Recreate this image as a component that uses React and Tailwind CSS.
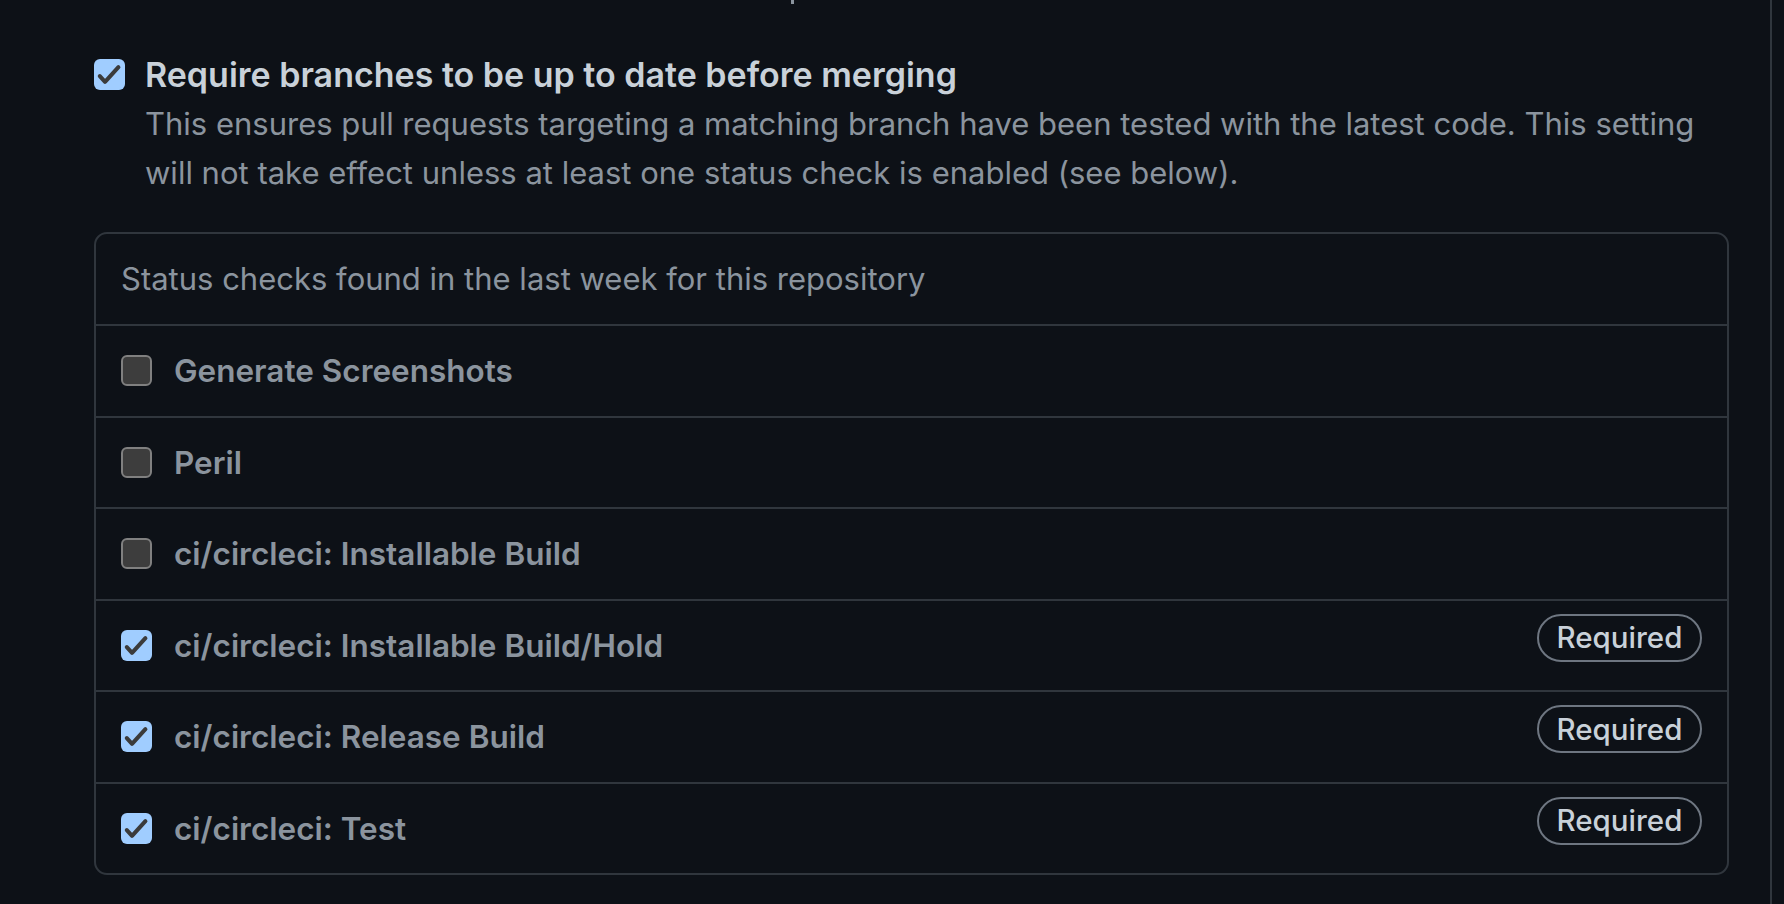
import React from 'react';

const checks = [
    { name: 'Generate Screenshots', checked: false },
    { name: 'Peril', checked: false },
    { name: 'ci/circleci: Installable Build', checked: false },
    { name: 'ci/circleci: Installable Build/Hold', checked: true },
    { name: 'ci/circleci: Release Build', checked: true },
    { name: 'ci/circleci: Test', checked: true },
];

function Box({ checked }) {
    if (!checked) {
        return (
            <span className="w-[31px] h-[31px] shrink-0 rounded-[6px] bg-[#3d3d3d] border-2 border-[#808080]" />
        );
    }
    return (
        <span className="w-[31px] h-[31px] shrink-0 rounded-[6px] bg-[#a0cdff] flex items-center justify-center">
            <svg viewBox="0 0 16 16" className="w-[31px] h-[31px]">
                <path
                    d="M3 8.8 L5.7 11.8 L12.6 4.2"
                    fill="none"
                    stroke="#3b3b3b"
                    strokeWidth="2.1"
                    strokeLinecap="round"
                    strokeLinejoin="round"
                />
            </svg>
        </span>
    );
}

export default function App() {
    return (
        <div
            className="w-full h-[904px] bg-[#0d1117] flex"
            style={{ fontFamily: 'Inter, "Noto Sans", sans-serif' }}
        >
            <div className="w-[1772px] h-full border-r-2 border-[#30363d] flex flex-col">
                <div className="h-[4px] flex">
                    <span className="ml-[791px] w-[3px] h-[4px] bg-[#8b949e]" />
                </div>
                <div className="pl-[94px] pr-[41px] pt-[46px]">
                    <div className="flex gap-[20px]">
                        <div className="h-[49px] flex items-center">
                            <Box checked />
                        </div>
                        <div>
                            <div className="h-[49px] leading-[49px] text-[34px] font-semibold text-[#c9d1d9] whitespace-nowrap">
                                Require branches to be up to date before merging
                            </div>
                            <p className="leading-[49px] text-[31px] text-[#8b949e] whitespace-nowrap">
                                This ensures pull requests targeting a matching branch have been tested with the latest code. This setting
                                <br />
                                will not take effect unless at least one status check is enabled (see below).
                            </p>
                        </div>
                    </div>

                    <div className="mt-[35px] border-2 border-[#30363d] rounded-[13px] overflow-hidden">
                        <div className="h-[90px] flex items-center px-[25px] text-[31px] text-[#8b949e]">
                            Status checks found in the last week for this repository
                        </div>
                        {checks.map((c) => (
                            <div
                                key={c.name}
                                className="h-[91.5px] border-t-2 border-[#30363d] flex items-center px-[25px] gap-[22px]"
                            >
                                <Box checked={c.checked} />
                                <span className="flex-1 text-[31.5px] font-semibold text-[#8b949e]">
                                    {c.name}
                                </span>
                                {c.checked && (
                                    <span className="self-start mt-[13px] h-[48px] w-[165px] rounded-full border-2 border-[#6e7681] flex items-center justify-center text-[29.5px] font-medium text-[#c9d1d9]">
                                        Required
                                    </span>
                                )}
                            </div>
                        ))}
                    </div>
                </div>
            </div>
        </div>
    );
}
